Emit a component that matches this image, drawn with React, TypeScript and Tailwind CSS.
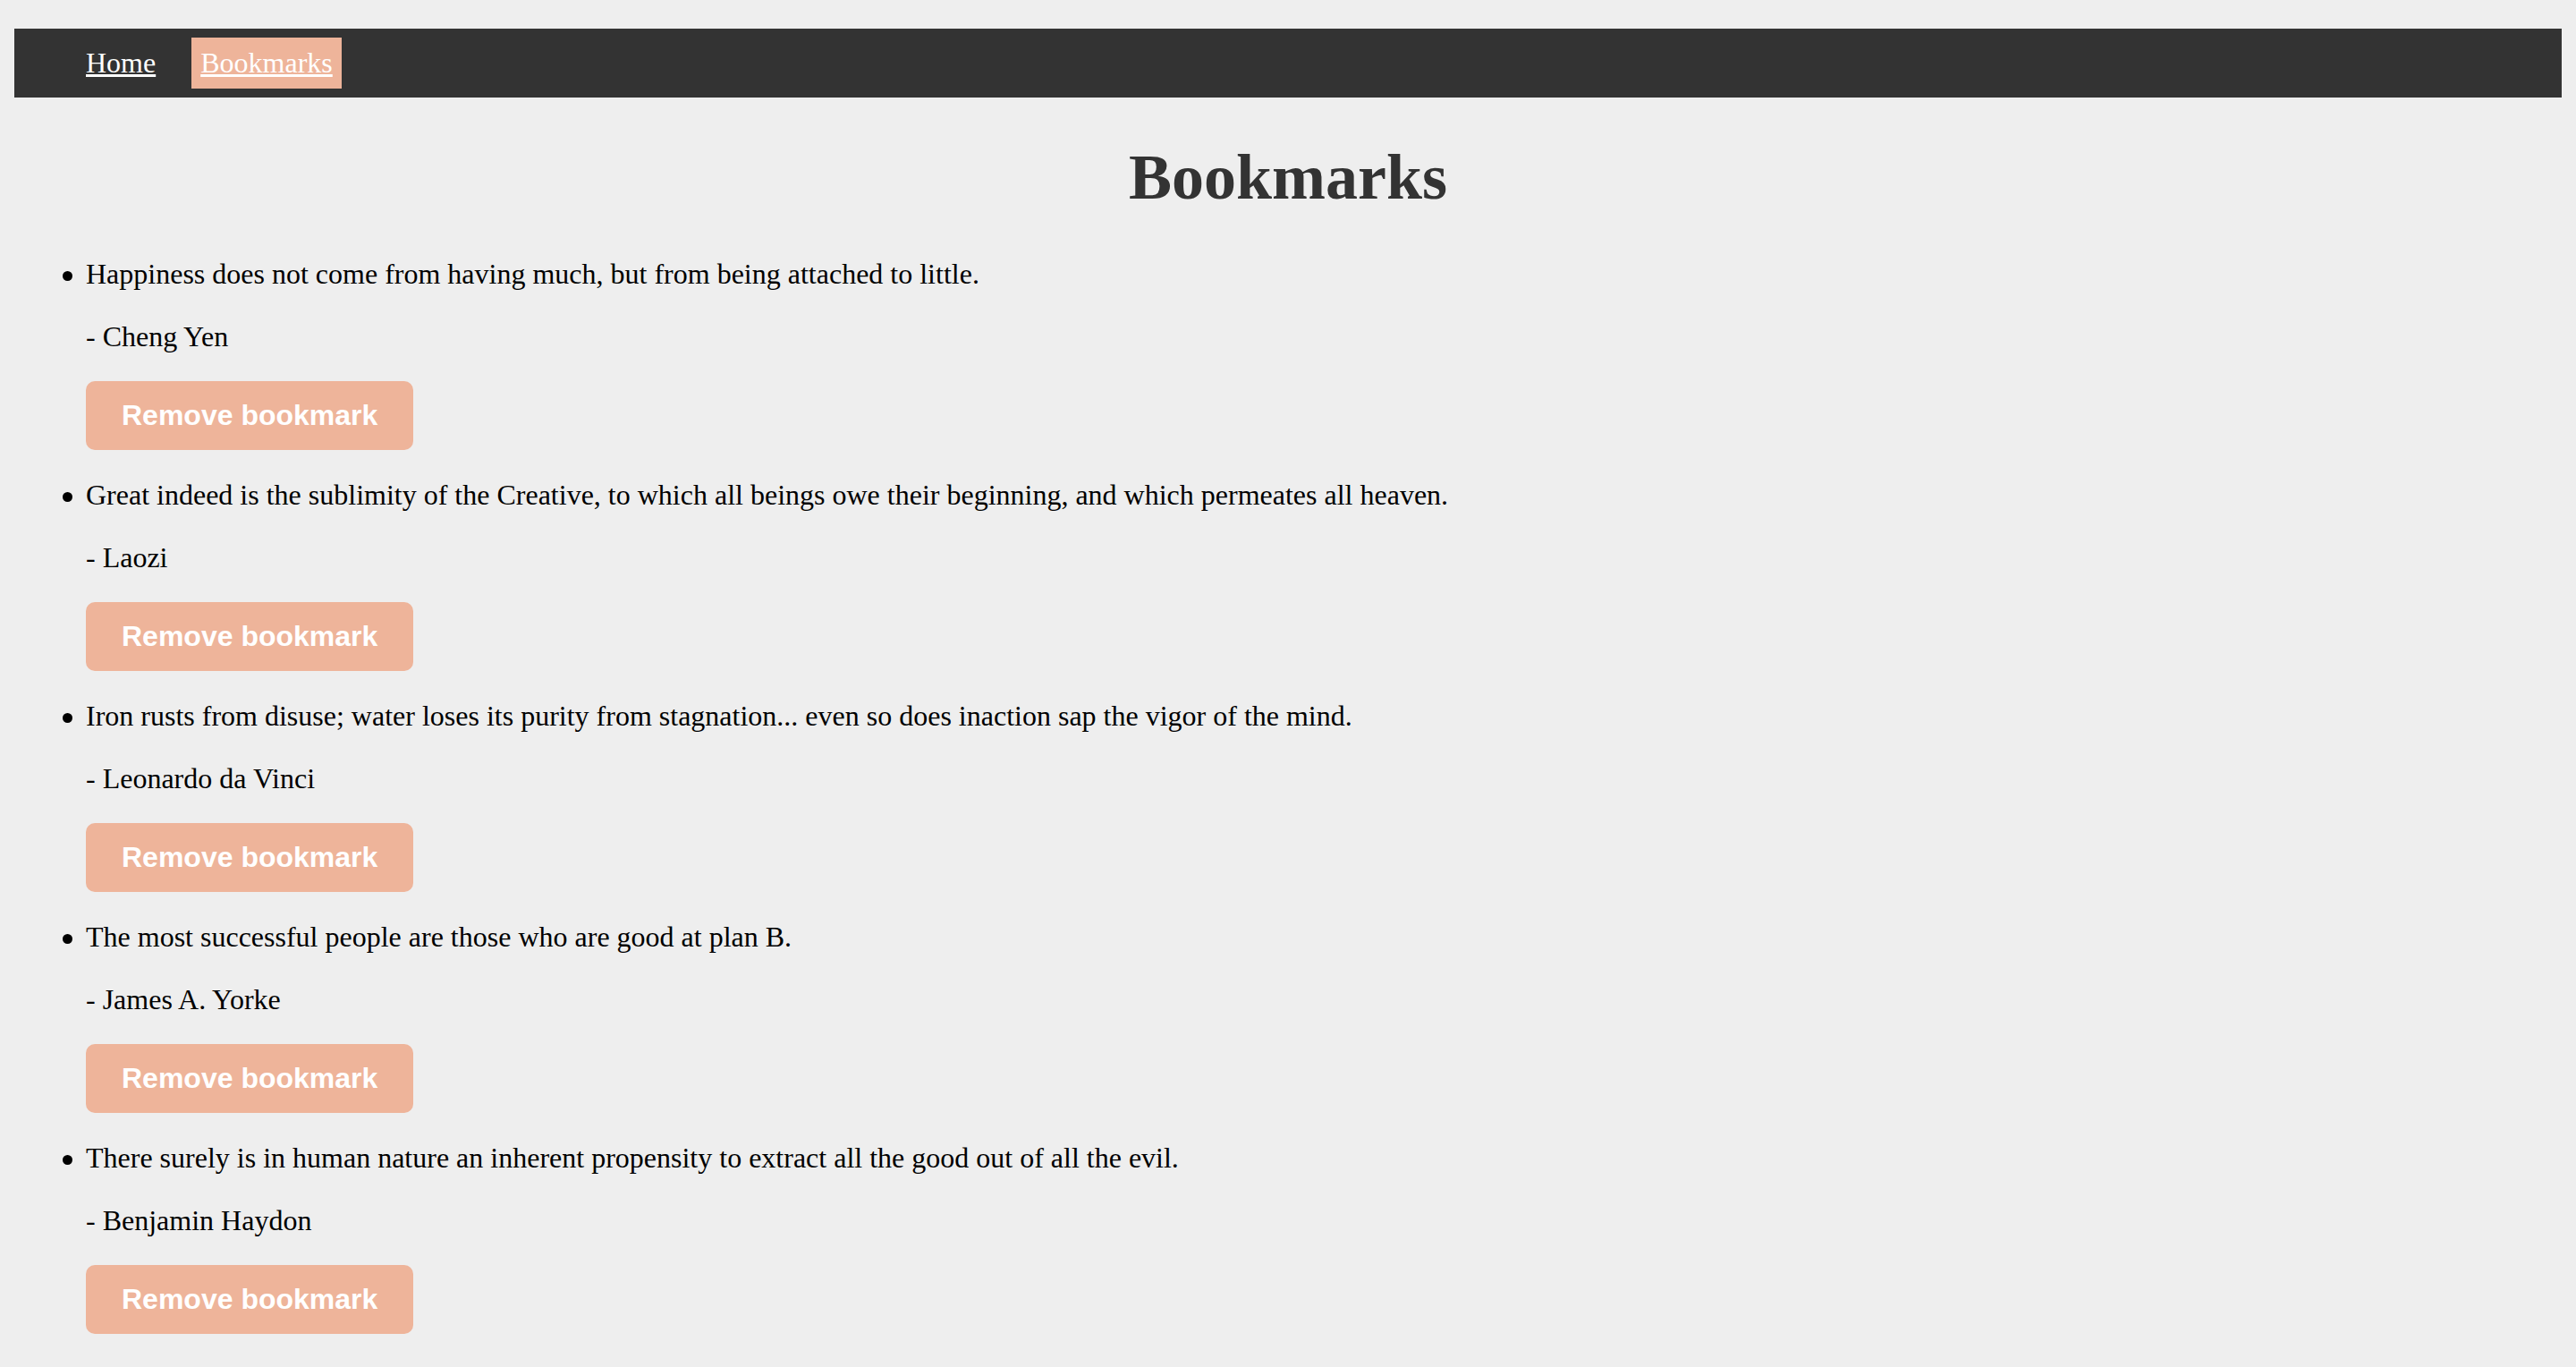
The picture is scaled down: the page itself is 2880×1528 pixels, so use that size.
const quotes = [
  {
    text: "Happiness does not come from having much, but from being attached to little.",
    author: "Cheng Yen",
  },
  {
    text: "Great indeed is the sublimity of the Creative, to which all beings owe their beginning, and which permeates all heaven.",
    author: "Laozi",
  },
  {
    text: "Iron rusts from disuse; water loses its purity from stagnation... even so does inaction sap the vigor of the mind.",
    author: "Leonardo da Vinci",
  },
  {
    text: "The most successful people are those who are good at plan B.",
    author: "James A. Yorke",
  },
  {
    text: "There surely is in human nature an inherent propensity to extract all the good out of all the evil.",
    author: "Benjamin Haydon",
  },
];

const serif = "font-['Liberation_Serif','Times_New_Roman',serif]";

const App = () => {
  return (
    <div className={`min-h-screen bg-[#eeeeee] pt-[32px] pb-[20px] ${serif}`}>
      {/* Navbar */}
      <nav className="mx-[16px] h-[77px] bg-[#333333] flex items-center pl-[70px] gap-[30px]">
        <a
          href="#"
          className="px-[10px] h-[57px] flex items-center text-[32px] leading-[37px] text-white underline"
        >
          Home
        </a>
        <a
          href="#"
          className="px-[10px] h-[57px] flex items-center bg-[#eeb49a] text-[32px] leading-[37px] text-white underline"
        >
          Bookmarks
        </a>
      </nav>

      {/* Title */}
      <h1 className="mt-[48px] text-center text-[72px] leading-[82px] font-bold text-[#333333]">
        Bookmarks
      </h1>

      {/* Bookmarked quotes */}
      <ul className="mt-[49px] pl-[70px] text-black">
        {quotes.map((q, i) => (
          <li key={q.author} className={`flex ${i > 0 ? "mt-[32px]" : ""}`}>
            <span className="mt-[15px] mr-[15.5px] w-[10.5px] h-[10.5px] shrink-0 rounded-full bg-black" />
            <div className="flex flex-col items-start">
              <p className="text-[32px] leading-[37px]">{q.text}</p>
              <p className="mt-[33px] text-[32px] leading-[37px]">- {q.author}</p>
              <button className="mt-[31px] h-[77px] px-[40px] rounded-[10px] bg-[#eeb49a] text-white font-bold text-[32px] leading-[37px] font-['Liberation_Sans',Arial,sans-serif]">
                Remove bookmark
              </button>
            </div>
          </li>
        ))}
      </ul>
    </div>
  );
};

export default App;
